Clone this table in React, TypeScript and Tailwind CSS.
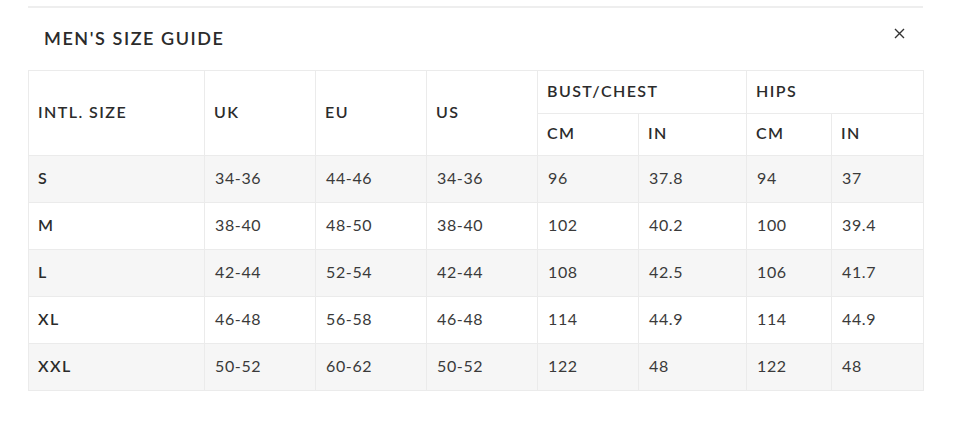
const rows = [
  ['S', '34-36', '44-46', '34-36', '96', '37.8', '94', '37'],
  ['M', '38-40', '48-50', '38-40', '102', '40.2', '100', '39.4'],
  ['L', '42-44', '52-54', '42-44', '108', '42.5', '106', '41.7'],
  ['XL', '46-48', '56-58', '46-48', '114', '44.9', '114', '44.9'],
  ['XXL', '50-52', '60-62', '50-52', '122', '48', '122', '48'],
];

const cell = 'border border-[#ebebeb] pl-[9px] pr-[9px] pb-[3px] text-left align-middle';

export default function App() {
  return (
    <div className="w-[960px] h-[432px] bg-white px-[28px] pt-[6px] font-['Lato','Open_Sans',sans-serif] text-[#2b2b2b]">
      <div className="w-[895px] border-t-2 border-[#eeeeee]">
        <div className="flex h-[62px] items-center justify-between pl-[16px] pr-[18px]">
          <h2 className="text-[18px] font-semibold tracking-[0.087em] pb-[2px]">MEN'S SIZE GUIDE</h2>
          <button className="text-[#333] mb-[12px]">
            <svg width="11" height="11" viewBox="0 0 11 11" fill="none" stroke="currentColor" strokeWidth="1.4">
              <path d="M1 1L10 10M10 1L1 10" />
            </svg>
          </button>
        </div>
        <table className="w-[895px] table-fixed border-collapse text-[16px]">
          <colgroup>
            <col className="w-[176px]" />
            <col className="w-[111px]" />
            <col className="w-[111px]" />
            <col className="w-[111px]" />
            <col className="w-[101px]" />
            <col className="w-[108px]" />
            <col className="w-[85px]" />
            <col className="w-[92px]" />
          </colgroup>
          <thead className="tracking-[0.09em]">
            <tr className="h-[43px]">
              <th rowSpan={2} className={cell + ' font-semibold'}>INTL. SIZE</th>
              <th rowSpan={2} className={cell + ' font-semibold'}>UK</th>
              <th rowSpan={2} className={cell + ' font-semibold'}>EU</th>
              <th rowSpan={2} className={cell + ' font-semibold'}>US</th>
              <th colSpan={2} className={cell + ' font-semibold'}>BUST/CHEST</th>
              <th colSpan={2} className={cell + ' font-semibold'}>HIPS</th>
            </tr>
            <tr className="h-[42px]">
              <th className={cell + ' font-semibold'}>CM</th>
              <th className={cell + ' font-semibold'}>IN</th>
              <th className={cell + ' font-semibold'}>CM</th>
              <th className={cell + ' font-semibold'}>IN</th>
            </tr>
          </thead>
          <tbody>
            {rows.map((r, i) => (
              <tr key={r[0]} className={'h-[47px] ' + (i % 2 === 0 ? 'bg-[#f6f6f6]' : 'bg-white')}>
                {r.map((v, j) => (
                  <td
                    key={j}
                    className={cell + (j === 0 ? ' font-semibold tracking-[0.09em]' : ' pl-[10px] tracking-[0.04em] text-[#3a3a3a]')}
                  >
                    {v}
                  </td>
                ))}
              </tr>
            ))}
          </tbody>
        </table>
      </div>
    </div>
  );
}
